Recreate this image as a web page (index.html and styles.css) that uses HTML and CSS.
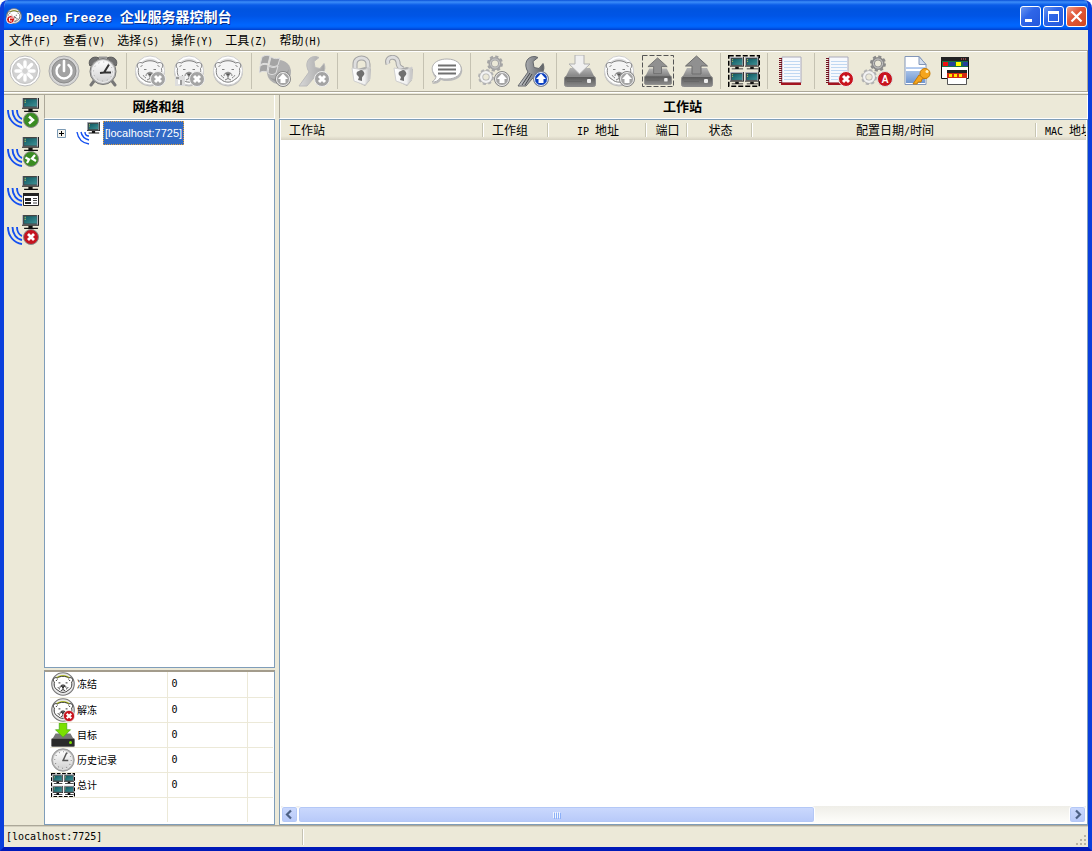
FILE: index.html
```html
<!doctype html>
<html lang="zh-CN">
	<head>
		<meta charset="utf-8">
		<title>Deep Freeze 企业服务器控制台</title>
		<meta name="viewport" content="width=device-width,initial-scale=1" />
		<link rel="stylesheet" href="styles.css">
	</head>
	<body>
		<!-- 图标库 -->
		<svg class="defs" width="0" height="0" aria-hidden="true">
			<defs>
				<linearGradient id="gDisc" x1="0" y1="0" x2="0" y2="1"><stop offset="0" stop-color="#fff"/><stop offset="1" stop-color="#d0d0d0"/></linearGradient>
				<linearGradient id="gMetal" x1="0" y1="0" x2="1" y2="0"><stop offset="0" stop-color="#d8d8d8"/><stop offset="1" stop-color="#a4a4a4"/></linearGradient>
				<linearGradient id="gSteel" x1="0" y1="0" x2="1" y2="0"><stop offset="0" stop-color="#c8cacd"/><stop offset="1" stop-color="#5f6266"/></linearGradient>
				<linearGradient id="gDrive" x1="0" y1="0" x2="0" y2="1"><stop offset="0" stop-color="#b4b4b4"/><stop offset="1" stop-color="#7c7c7c"/></linearGradient>
				<linearGradient id="gFront" x1="0" y1="0" x2="0" y2="1"><stop offset="0" stop-color="#555"/><stop offset="1" stop-color="#8c8c8c"/></linearGradient>
				<linearGradient id="gLock" x1="0" y1="0" x2="1" y2="0"><stop offset="0" stop-color="#fff"/><stop offset=".7" stop-color="#f0f0f0"/><stop offset="1" stop-color="#bdbdbd"/></linearGradient>
				<linearGradient id="gDoc" x1="0" y1="0" x2="0" y2="1"><stop offset="0" stop-color="#b9cff0"/><stop offset="1" stop-color="#6f96d0"/></linearGradient>
				<linearGradient id="gScreen" x1="0" y1="0" x2="1" y2="1"><stop offset="0" stop-color="#0c5560"/><stop offset="1" stop-color="#3f9295"/></linearGradient>
			</defs>
			<symbol id="snow" viewBox="0 0 32 32">
				<circle cx="16" cy="16" r="15" fill="#fff" stroke="#bdbdbd"/>
				<circle cx="16" cy="16" r="12.500" fill="#d2d2d2" stroke="#c4c4c4"/>
				<g stroke="#fff" stroke-width="3.400" stroke-linecap="round"><path d="M16 7v4M16 21v4M7 16h4M21 16h4M9.500 9.500l3 3M19.500 19.500l3 3M22.500 9.500l-3 3M12.500 19.500l-3 3"/></g>
				<circle cx="16" cy="16" r="3.500" fill="#d2d2d2" stroke="#fff"/>
			</symbol>
			<symbol id="power" viewBox="0 0 32 32">
				<circle cx="16" cy="16" r="15" fill="#d6d6d6" stroke="#aaa"/>
				<circle cx="16" cy="16" r="12" fill="#a2a2a2" stroke="#8c8c8c"/>
				<path d="M11.500 10a7.500 7.500 0 1 0 9 0" fill="none" stroke="#fff" stroke-width="2.400" stroke-linecap="round"/>
				<path d="M16 6v10" stroke="#fff" stroke-width="2.600" stroke-linecap="round"/>
			</symbol>
			<symbol id="alarm" viewBox="0 0 32 32">
				<path d="M7 26l-3 4M25 26l3 4" stroke="#777" stroke-width="3" stroke-linecap="round"/>
				<path d="M3 11C0 5 6 0 12 3zM29 11c3-6-3-11-9-8z" fill="#707070" stroke="#5c5c5c"/>
				<path d="M12 2.500h8" stroke="#999" stroke-width="2"/>
				<circle cx="16" cy="16.500" r="13" fill="#b8b8b8" stroke="#777"/>
				<circle cx="16" cy="16.500" r="11" fill="url(#gDisc)" stroke="#eee"/>
				<path d="M22 9.500l-5 8-4 .5M17 17.500h7" fill="none" stroke="#333" stroke-width="2"/>
				<circle cx="16" cy="16.500" r="9.500" fill="none" stroke="#aaa" stroke-dasharray="1 3.970"/>
			</symbol>
			<symbol id="bearFace" viewBox="0 0 32 32">
				<path d="M4.500 13.500c-3-3-.5-7.500 4-5.500 4-3 11-3 15 0 4.500-2 7 2.500 4 5.500 1 6-1 9-5 11-3 3.500-10 3.500-13 0-4-2-6-5-5-11z"/>
				<path d="M6.500 12l2-2M25.500 12l-2-2M10 14.500h2.500M19.500 14.500H22M9 20c1 1 1 2 3 3M23 20c-1 1-1 2-3 3M12 21c0-5 8-5 8 0M16 21v2.500l-3 1.500M16 23.500l3 1.500" fill="none"/>
				<path d="M13.500 18.500h5L16 21.500z" fill="#555"/>
			</symbol>
			<symbol id="bear" viewBox="0 0 32 32">
				<circle cx="16" cy="16.500" r="15" fill="#bcbcbc"/>
				<circle cx="16" cy="15.500" r="14.500" fill="#fff" stroke="#d0d0d0"/>
				<circle cx="16" cy="15.500" r="12" fill="#dcdcdc"/>
				<use href="#bearFace" fill="#f4f4f4" stroke="#808080"/>
			</symbol>
			<symbol id="bearOn" viewBox="0 0 32 32">
				<circle cx="16" cy="16" r="15" fill="#e8e8e8" stroke="#777" stroke-width="1.500"/>
				<path d="M4 11c4-9 20-9 24 0v3H4z" fill="#b4c400"/>
				<use href="#bearFace" fill="#fff" stroke="#333" stroke-width="1.300"/>
			</symbol>
			<symbol id="badgeX" viewBox="0 0 32 32">
				<circle cx="24" cy="24" r="7.500" fill="currentColor" stroke="#eee"/>
				<path d="M21 21l6 6M27 21l-6 6" stroke="#fff" stroke-width="3"/>
			</symbol>
			<symbol id="badgeUp" viewBox="0 0 32 32">
				<circle cx="24" cy="24" r="7.500" fill="currentColor" stroke="#888"/>
				<circle cx="24" cy="24" r="6.500" fill="none" stroke="#eee"/>
				<path d="M24 18.500l5 5.500h-2.500v4h-5v-4H19z" fill="#fff"/>
			</symbol>
			<symbol id="winGlobe" viewBox="0 0 32 32">
				<circle cx="20" cy="17" r="12" fill="#b0b0b0"/>
				<path d="M10 22c6 4 14 2 20-8-2 12-10 18-20 8z" fill="#999"/>
				<path d="M3 2c3-2 5-2 8-1l-2 8c-3-1-5-1-8 1zM12 2c3 2 6 2 9 1l-2 7c-3 2-5 2-9 0zM1 11c3-2 5-2 8-1l-1 7c-3-1-5-1-8 1zM10 11c3 2 5 2 9 0l-2 7c-3 2-5 2-8 0z" fill="#a4a4a4" stroke="#dedede"/>
			</symbol>
			<symbol id="wrench" viewBox="0 0 32 32">
				<path d="M1 31l10-14C6 9 10 1 18 1.500l3 1-5 4 1 6 5 1 4-5c3 7-2 13-8 12L9 31z" fill="url(#gMetal)" stroke="#bbb"/>
			</symbol>
			<symbol id="wrenchOn" viewBox="0 0 32 32">
				<path d="M1 31l10-14C6 9 10 1 18 1.500l3 1-5 4 1 6 5 1 4-5c3 7-2 13-8 12L9 31z" fill="url(#gSteel)" stroke="#66696d"/>
				<path d="M5 30l8-12M8 30l7-11" stroke="#44474b" fill="none"/>
			</symbol>
			<symbol id="lockBody" viewBox="0 0 32 32">
				<path d="M8 15l12-3 6 2-1 11-5 6-10-5z" fill="#aaa"/>
				<path d="M7 13l12 2 6-3v12l-5 6-11-4z" fill="url(#gLock)" stroke="#d0d0d0"/>
				<path d="M14 16a2.500 2.500 0 0 0-1.500 4.500L14 22l-1 3 4 1v-3.500l1-1.500a2.500 2.500 0 0 0-4-5z" fill="#707070"/>
			</symbol>
			<symbol id="lock" viewBox="0 0 32 32">
				<path d="M10 14V9c0-8 13-8 13 0v5" fill="none" stroke="#a4a4a4" stroke-width="5"/>
				<path d="M10 14V9c0-8 13-8 13 0v5" fill="none" stroke="#dedede" stroke-width="3"/>
				<use href="#lockBody"/>
			</symbol>
			<symbol id="unlock" viewBox="0 0 32 32">
				<path d="M4 9c-3-8 9-9 10-2 0 4 1 5 5 7" fill="none" stroke="#a4a4a4" stroke-width="5"/>
				<path d="M4 9c-3-8 9-9 10-2 0 4 1 5 5 7" fill="none" stroke="#dedede" stroke-width="3"/>
				<use href="#lockBody" x="3"/>
			</symbol>
			<symbol id="speech" viewBox="0 0 32 32">
				<path d="M17 5c19 0 19 21 0 21-3 0-5 0-7-1-2 3-5 4-9 4 3-2 4-4 4-6C-3 16 3 5 17 5z" fill="#bbb"/>
				<path d="M16 4c19 0 19 20 0 20-3 0-5 0-7-1-2 3-4 4-8 4 3-2 4-4 4-6C-3 14 2 4 16 4z" fill="#fff" stroke="#b0b0b0"/>
				<path d="M7 10.500h18M7 14.500h18M7 18.500h18" stroke="#707070" stroke-width="1.800"/>
			</symbol>
			<symbol id="gears" viewBox="0 0 32 32">
				<circle cx="17" cy="8.500" r="7" fill="none" stroke="currentColor" stroke-width="2" stroke-dasharray="3.200 2.300"/>
				<circle cx="17" cy="8.500" r="4.800" fill="none" stroke="currentColor" stroke-width="3.600"/>
				<circle cx="17" cy="8.500" r="4.500" fill="none" stroke="#ccc"/>
				<circle cx="8" cy="22" r="7" fill="none" stroke="#b4b4b4" stroke-width="2" stroke-dasharray="3.200 2.300"/>
				<circle cx="8" cy="22" r="4.800" fill="none" stroke="#b0b0b0" stroke-width="4"/>
				<circle cx="8" cy="22" r="4.800" fill="none" stroke="#f2f2f2" stroke-width="2.400"/>
			</symbol>
			<symbol id="drive" viewBox="0 0 32 32">
				<path d="M6 13h20l5 10H1z" fill="url(#gDrive)"/>
				<rect x=".5" y="21.500" width="31" height="10" rx="2" fill="url(#gFront)" stroke="#8a8a8a"/>
				<path d="M3 26.500h15" stroke="#666"/>
				<rect x="23" y="24" width="4" height="4" rx="1" fill="#eee"/>
			</symbol>
			<symbol id="driveOn" viewBox="0 0 32 32">
				<path d="M6 14h20l5 9H1z" fill="#777"/>
				<rect x=".5" y="20.500" width="31" height="11" rx="2" fill="#2a2a2a" stroke="#777"/>
				<circle cx="26" cy="26" r="2" fill="#7de000"/>
				<path d="M11 0h10v9h5L16 19 6 9h5z" fill="#7be000" stroke="#4aa818"/>
			</symbol>
			<symbol id="arrowDown" viewBox="0 0 32 32"><path d="M11 0h9v9h6L15.500 19 5 9h6z" fill="#f0f0f0" stroke="#b0b0b0"/></symbol>
			<symbol id="arrowUp" viewBox="0 0 32 32"><path d="M15.500 1l11 10H20v8h-9v-8H4.500z" fill="#909090" stroke="#6c6c6c"/></symbol>
			<symbol id="dashes" viewBox="0 0 32 32"><rect x=".5" y=".5" width="31" height="31" fill="none" stroke="currentColor" stroke-dasharray="5 2"/></symbol>
			<symbol id="monitor" viewBox="0 0 16 16">
				<path d="M0 0h16v11H0z" fill="#222"/>
				<path d="M0 0h15v10H0z" fill="#b8bcc6"/>
				<path d="M1 1h13v9H1z" fill="#444"/>
				<path d="M2 2h12v7H2z" fill="url(#gScreen)"/>
				<path d="M2.500 3h1M2.500 5h1" stroke="#e8e060"/>
				<path d="M6 11h4v2H6zM2 13h13v1H2z" fill="#111"/>
			</symbol>
			<symbol id="four" viewBox="0 0 32 32">
				<rect x=".75" y=".75" width="30.500" height="30.500" fill="none" stroke="#000" stroke-width="1.500" stroke-dasharray="5 2"/>
				<use href="#monitor" x="2" y="2" width="14" height="14"/>
				<use href="#monitor" x="17" y="2" width="14" height="14"/>
				<use href="#monitor" x="2" y="17" width="14" height="14"/>
				<use href="#monitor" x="17" y="17" width="14" height="14"/>
			</symbol>
			<symbol id="notebook" viewBox="0 0 32 32">
				<path d="M6 4h20v26H6z" fill="#a31420"/>
				<path d="M7 2h19v26H7z" fill="#f7f9fd" stroke="#aab"/>
				<path d="M9 6.500h16M9 9.500h16M9 12.500h16M9 15.500h16M9 18.500h16M9 21.500h16M9 24.500h16" stroke="#c0d8f2"/>
				<path d="M5.500 3v26" stroke="#701020" stroke-width="3" stroke-dasharray="1 1"/>
				<path d="M6 28.500h20" stroke="#a31420" stroke-width="2"/>
			</symbol>
			<symbol id="docKey" viewBox="0 0 32 32">
				<path d="M5 1.500h14l7 8v20H5z" fill="#fff" stroke="#8296b8"/>
				<path d="M19 1.500v8h7z" fill="#d3deee" stroke="#8296b8"/>
				<path d="M6 12h19v2H6zM6 16h19v12H6z" fill="url(#gDoc)"/>
				<path d="M19 20L13 29h4l1-2h3l1-3 5-1z" fill="#f6a51c" stroke="#c47a08"/>
				<circle cx="25" cy="18.500" r="5" fill="#f6a51c" stroke="#c47a08"/>
				<circle cx="27" cy="16.500" r="1.500" fill="#fff0c0"/>
			</symbol>
			<symbol id="report" viewBox="0 0 32 32">
				<path d="M2.500 2.500h27v21h-27z" fill="#fff" stroke="#111"/>
				<path d="M2 2h28v4H2z" fill="#222"/><path d="M22 4h6" stroke="#e66" stroke-dasharray="1 1"/>
				<path d="M3 6h26v6H3z" fill="#187048"/>
				<path d="M4 7h5v4H4z" fill="#e11"/><path d="M10 7h6v4h-6zM24 7h5v4h-5z" fill="#24419c"/><path d="M17 7h5v4h-5z" fill="#ff0"/>
				<path d="M8.500 15.500h19v14h-19z" fill="#fff" stroke="#555"/>
				<path d="M8 15h20v3H8z" fill="#222"/><path d="M8 18h20v5H8z" fill="#d42a10"/>
				<path d="M10 20.500h13" stroke="#ffe600" stroke-width="3" stroke-dasharray="3 2"/>
			</symbol>
			<symbol id="waves" viewBox="0 0 32 32">
				<g fill="none" stroke="#1450f0" stroke-width="1.900"><path d="M1 12c0 9 6 16 14 17M5.500 12c0 7 4 12 9.500 13M10 12c0 4 2 8 5 9"/></g>
			</symbol>
			<symbol id="station" viewBox="0 0 32 32">
				<use href="#waves"/><use href="#monitor" x="15" y="-1" width="17" height="17"/>
			</symbol>
			<symbol id="badgeGreen" viewBox="0 0 32 32"><circle cx="24" cy="22" r="7.500" fill="#3a8c22" stroke="#8a8a8a"/></symbol>
			<symbol id="clock" viewBox="0 0 32 32">
				<circle cx="16" cy="16" r="15" fill="#b8b8b8" stroke="#888"/>
				<circle cx="16" cy="16" r="12.500" fill="url(#gDisc)" stroke="#eee"/>
				<circle cx="16" cy="16" r="11" fill="none" stroke="#777" stroke-width="1.500" stroke-dasharray="1 4.760"/>
				<path d="M21 6l-5 11M15 16.500h8" stroke="#555" stroke-width="2"/>
			</symbol>
		</svg>

		<div class="window">
			<header class="titlebar">
				<svg class="app-icon"><use href="#bearOn"/><circle cx="4.500" cy="11.500" r="4" fill="#d01818" stroke="#fff"/><path d="M7 10H3.500v3H6" fill="none" stroke="#fff"/></svg>
				<h1><span class="latin">Deep Freeze </span>企业服务器控制台</h1>
				<div class="win-btns">
					<button type="button" aria-label="最小化"><svg viewBox="0 0 21 21"><path d="M5 13h7v3H5z" fill="#fff"/></svg></button>
					<button type="button" aria-label="最大化"><svg viewBox="0 0 21 21"><path d="M5 5h11v11H5zM6 8v7h9V8z" fill="#fff" fill-rule="evenodd"/></svg></button>
					<button type="button" class="close" aria-label="关闭"><svg viewBox="0 0 21 21"><path d="M5.500 5.500l10 10M15.500 5.500l-10 10" stroke="#fff" stroke-width="2.200"/></svg></button>
				</div>
			</header>

			<nav class="menu">
				<button type="button">文件<span class="latin">(F)</span></button>
				<button type="button">查看<span class="latin">(V)</span></button>
				<button type="button">选择<span class="latin">(S)</span></button>
				<button type="button">操作<span class="latin">(Y)</span></button>
				<button type="button">工具<span class="latin">(Z)</span></button>
				<button type="button">帮助<span class="latin">(H)</span></button>
			</nav>

			<div class="toolbar">
				<div class="group">
					<button type="button" aria-label="冻结"><svg><use href="#snow"/></svg></button>
					<button type="button" aria-label="关机"><svg><use href="#power"/></svg></button>
					<button type="button" aria-label="计划"><svg><use href="#alarm"/></svg></button>
				</div>
				<div class="group">
					<button type="button" aria-label="解冻"><svg class="off"><use href="#bear"/><use href="#badgeX"/></svg></button>
					<button type="button" aria-label="锁定解冻"><svg class="off"><path d="M3 12h26v17H3z" fill="#ccc"/><use href="#bear"/><path d="M2 21h10v10H2z" fill="#ddd"/><path d="M3 22h3v2H3zM7 25h2v5H7z" fill="#999"/><path d="M5 25h2v4H5z" fill="#fff"/><use href="#badgeX"/></svg></button>
					<button type="button" aria-label="重启冻结"><svg><use href="#bear"/></svg></button>
				</div>
				<div class="group">
					<button type="button" aria-label="系统更新"><svg class="off"><use href="#winGlobe"/><use href="#badgeUp"/></svg></button>
					<button type="button" aria-label="停止维护"><svg class="off"><use href="#wrench"/><use href="#badgeX"/></svg></button>
				</div>
				<div class="group">
					<button type="button" aria-label="锁定"><svg><use href="#lock"/></svg></button>
					<button type="button" aria-label="解锁"><svg><use href="#unlock"/></svg></button>
				</div>
				<div class="group">
					<button type="button" aria-label="发送消息"><svg><use href="#speech"/></svg></button>
				</div>
				<div class="group">
					<button type="button" aria-label="更新配置"><svg class="off"><use href="#gears"/><use href="#badgeUp"/></svg></button>
					<button type="button" aria-label="更新工具"><svg class="blue"><use href="#wrenchOn"/><use href="#badgeUp"/></svg></button>
				</div>
				<div class="group">
					<button type="button" aria-label="安装"><svg><use href="#drive"/><use href="#arrowDown"/></svg></button>
					<button type="button" aria-label="更新"><svg class="off"><use href="#bear"/><use href="#badgeUp"/></svg></button>
					<button type="button" aria-label="卸载所选"><svg class="dark"><use href="#drive" x="2" y="2" width="28" height="28"/><use href="#arrowUp" x="2" y="2" width="28" height="28"/><use href="#dashes"/></svg></button>
					<button type="button" aria-label="卸载"><svg><use href="#drive"/><use href="#arrowUp"/></svg></button>
				</div>
				<div class="group">
					<button type="button" aria-label="全选"><svg><use href="#four"/></svg></button>
				</div>
				<div class="group">
					<button type="button" aria-label="日志"><svg><use href="#notebook"/></svg></button>
				</div>
				<div class="group">
					<button type="button" aria-label="清除日志"><svg class="red"><use href="#notebook"/><use href="#badgeX"/></svg></button>
					<button type="button" aria-label="配置管理"><svg class="grey"><use href="#gears"/><circle cx="24" cy="24" r="7.500" fill="#c8141e" stroke="#ddd"/><text class="badge-text" x="24" y="28">A</text></svg></button>
					<button type="button" aria-label="密码"><svg><use href="#docKey"/></svg></button>
					<button type="button" aria-label="报告"><svg><use href="#report"/></svg></button>
				</div>
			</div>

			<main>
				<aside class="sidebar">
					<button type="button" aria-label="连接"><svg><use href="#station"/><use href="#badgeGreen"/><path d="M22 18.500l4 3.500-4 3.500" fill="none" stroke="#fff" stroke-width="2.500"/></svg></button>
					<button type="button" aria-label="断开"><svg><use href="#station"/><use href="#badgeGreen"/><path d="M18.500 20.500l3.500 2-2 3.500M28 18l-3 3.500 4 2.500" fill="none" stroke="#fff" stroke-width="2.200"/></svg></button>
					<button type="button" aria-label="属性"><svg><use href="#station"/><path d="M16.500 17.500h15v12h-15z" fill="#fff" stroke="#222"/><path d="M16 17h16v3H16zM18 22h6v3h-6zM18 26h6v2h-6z" fill="#222"/><path d="M26 22.500h4M26 24.500h4M26 27h4" stroke="#444"/></svg></button>
					<button type="button" aria-label="移除"><svg><use href="#station"/><circle cx="24" cy="22" r="7.500" fill="#c41420" stroke="#8a8a8a"/><path d="M21 19l6 6M27 19l-6 6" stroke="#fff" stroke-width="2.800"/></svg></button>
				</aside>

				<section class="left">
					<h2>网络和组</h2>
					<ul class="tree">
						<li>
							<button type="button" class="expand" aria-label="展开"><svg viewBox="0 0 9 9"><path d="M.5.5h8v8h-8z" fill="#f4f3ee" stroke="#7b9ab5"/><path d="M2 4.500h5M4.500 2v5" stroke="#000"/></svg></button>
							<svg class="node-icon" viewBox="0 0 24 24"><path d="M1 11c1 6 5 11 12 12M5 11c1 5 4 7 8 8M9 11c0 3 2 4 4 4" fill="none" stroke="#1450f0" stroke-width="1.400"/><use href="#monitor" x="11" y="1" width="13" height="13"/></svg>
							<a href="#" class="node">[localhost:7725]</a>
						</li>
					</ul>
					<div class="stats">
						<table>
							<colgroup><col class="c-name"><col class="c-num"><col></colgroup>
							<tr><th scope="row"><svg viewBox="0 0 32 32"><use href="#bearOn"/></svg>冻结</th><td>0</td><td></td></tr>
							<tr><th scope="row"><svg viewBox="0 0 32 32" class="red"><use href="#bearOn"/><use href="#badgeX"/></svg>解冻</th><td>0</td><td></td></tr>
							<tr><th scope="row"><svg viewBox="0 0 32 32"><use href="#driveOn"/></svg>目标</th><td>0</td><td></td></tr>
							<tr><th scope="row"><svg viewBox="0 0 32 32"><use href="#clock"/></svg>历史记录</th><td>0</td><td></td></tr>
							<tr><th scope="row"><svg viewBox="0 0 32 32"><use href="#four"/></svg>总计</th><td>0</td><td></td></tr>
							<tr class="last"><td></td><td></td><td></td></tr>
						</table>
					</div>
				</section>

				<section class="right">
					<h2>工作站</h2>
					<div class="list">
						<div class="list-view">
							<table>
								<colgroup><col class="w-station"><col class="w-group"><col class="w-ip"><col class="w-port"><col class="w-state"><col class="w-date"><col class="w-mac"></colgroup>
								<tr>
									<th scope="col" class="start">工作站</th>
									<th scope="col" class="start">工作组</th>
									<th scope="col"><span class="latin">IP </span>地址</th>
									<th scope="col">端口</th>
									<th scope="col">状态</th>
									<th scope="col">配置日期<span class="latin">/</span>时间</th>
									<th scope="col" class="start"><span class="latin">MAC </span>地址</th>
								</tr>
							</table>
						</div>
						<div class="scroll">
							<button type="button" aria-label="向左"><svg viewBox="0 0 17 17"><path d="M10 4.500l-4 4 4 4" fill="none" stroke="#4d6185" stroke-width="2.200"/></svg></button>
							<div class="track"><div class="thumb"><i></i><i></i><i></i><i></i></div></div>
							<button type="button" aria-label="向右"><svg viewBox="0 0 17 17"><path d="M7 4.500l4 4-4 4" fill="none" stroke="#4d6185" stroke-width="2.200"/></svg></button>
						</div>
					</div>
				</section>
			</main>

			<footer class="status">
				<span class="host">[localhost:7725]</span>
				<svg class="grip" viewBox="0 0 13 13"><path d="M9 1h2v2H9zM5 5h2v2H5zM9 5h2v2H9zM1 9h2v2H1zM5 9h2v2H5zM9 9h2v2H9z" fill="#b8b4a3"/></svg>
			</footer>
		</div>
	</body>
</html>
```
FILE: styles.css
```css
* {
	margin: 0;
	padding: 0;
	box-sizing: border-box;
}
body{
	background-color: #fff;
	color: #000;
	font: 12px/16px "Noto Sans CJK SC", sans-serif;
}
button{
	border: 0;
	background: none;
	font: inherit;
	color: inherit;
}
svg{
	display: block;
	flex: none;
}
.defs{
	position: absolute;
}
.latin{
	font-family: "DejaVu Sans Mono", monospace;
	font-size: 10px;
	line-height: 12px;
	white-space: pre;
}
.off{color: #a4a4a4;}
.blue{color: #0a3fc0;}
.red{color: #c8141e;}
.grey{color: #8a8a8a;}
.dark{color: #555;}

/* 窗口 */
.window{
	min-height: 100vh;
	display: flex;
	flex-direction: column;
	background-color: #ece9d8;
	border: solid #0a3fdc;
	border-width: 0 4px 4px;
	border-bottom-color: #0019b8;
	border-radius: 8px 8px 0 0;
	overflow: hidden;
}
.titlebar{
	height: 30px;
	margin: 0 -4px;
	padding: 2px 5px 0 6px;
	display: flex;
	align-items: center;
	background: linear-gradient(#0a50d8 0, #3c8df8 2px, #0a5ce8 5px, #0054e0 9px, #0055e6 16px, #0066ff 25px, #0062f8 27px, #003fce 30px);
}
.app-icon{
	width: 16px;
	height: 16px;
	margin-right: 4px;
}
.titlebar h1{
	flex: 1;
	color: #fff;
	font-size: 14px;
	line-height: 20px;
	font-weight: bold;
	text-shadow: 1px 1px #0a2f8c;
}
.titlebar h1 .latin{
	font-family: "Liberation Mono", monospace;
	font-size: 13px;
}
.win-btns{
	display: flex;
	gap: 2px;
}
.win-btns button{
	width: 21px;
	height: 21px;
	border: 1px solid #fff;
	border-radius: 3px;
	background: linear-gradient(135deg, #6b96f0, #2f66e8 40%, #2458dc);
}
.win-btns .close{
	background: linear-gradient(135deg, #f0a08a, #e2583a 40%, #d04820);
}
.win-btns svg{
	width: 21px;
	height: 21px;
	margin: -1px;
}

/* 菜单 */
.menu{
	height: 20px;
	display: flex;
	gap: 12px;
	padding-left: 5px;
	align-items: center;
}

/* 工具栏 */
.toolbar{
	height: 42px;
	display: flex;
	align-items: center;
	border-top: 1px solid #aca899;
	border-bottom: 1px solid #aca899;
	border-right: 1px solid #aca899;
	box-shadow: inset 0 1px #fff, 0 1px #fff;
	padding-left: 1px;
}
.group{
	display: flex;
}
.group + .group{
	margin-left: 4px;
	border-left: 1px solid #c5c2b2;
	padding-left: 3px;
}
.group button{
	width: 39px;
	height: 36px;
	padding-left: 4px;
}
.group svg,.sidebar svg{
	width: 32px;
	height: 32px;
}
.badge-text{
	fill: #fff;
	font: bold 10px "Liberation Sans", sans-serif;
	text-anchor: middle;
}

/* 主体 */
main{
	flex: 1;
	display: flex;
	margin-top: 2px;
	border-top: 1px solid #aca899;
}
.sidebar{
	width: 40px;
	padding: 3px 3px 0;
	display: flex;
	flex-direction: column;
	gap: 7px;
}
.left,.right{
	display: flex;
	flex-direction: column;
}
.left{
	width: 231px;
}
.right{
	flex: 1;
	min-width: 0;
	margin-left: 4px;
}
h2{
	height: 24px;
	padding-right: 2px;
	border-left: 1px solid #aca899;
	border-right: 1px solid #fff;
	border-bottom: 1px solid #fff;
	font-size: 13px;
	line-height: 22px;
	font-weight: bold;
	text-align: center;
}
.tree,.stats,.list{
	background-color: #fff;
	border: 1px solid #7f9db9;
}
.tree{
	flex: 1;
	list-style: none;
	padding: 1px 12px;
}
.tree li{
	display: flex;
	align-items: center;
}
.expand svg{
	width: 9px;
	height: 9px;
}
.node-icon{
	width: 24px;
	height: 24px;
	margin: 0 3px 0 10px;
}
.node{
	height: 24px;
	padding: 0 1px;
	border: 1px dotted #e0a040;
	background-color: #316ac5;
	color: #fff;
	font: 11px/22px "Liberation Sans", sans-serif;
	text-decoration: none;
}

/* 统计 */
.stats{
	margin-top: 2px;
	padding: 0 1px 2px 5px;
	border-top: 2px solid #a39c8c;
}
.stats table,.list table{
	width: 100%;
	table-layout: fixed;
	border-collapse: collapse;
}
.stats tr{
	height: 25px;
	border-bottom: 1px solid #ece9d8;
}
.stats .last{
	border-bottom: 0;
}
.c-name{width: 117px;}
.c-num{width: 80px;}
.stats th{
	display: flex;
	align-items: center;
	gap: 2px;
	height: 24px;
	padding-left: 1px;
	font-size: 10px;
	font-weight: normal;
}
.stats td{
	padding-left: 4px;
	border-left: 1px solid #ece9d8;
	font: 10px/16px "DejaVu Sans Mono", monospace;
}
.stats .last td:first-child{
	border-left: 0;
}
.stats th svg{
	width: 24px;
	height: 24px;
}

/* 工作站列表 */
.list{
	flex: 1;
	display: flex;
	flex-direction: column;
	padding: 0 1px 1px;
}
.list-view{
	flex: 1;
	overflow: hidden;
}
.list table{
	width: 870px;
}
.w-station{width: 203px;}
.w-group{width: 65px;}
.w-ip{width: 98px;}
.w-port{width: 41px;}
.w-state{width: 65px;}
.w-date{width: 284px;}
.list tr{
	height: 20px;
	background: linear-gradient(#ece9d8 16px, #d6d2c2);
}
.list th{
	font-weight: normal;
	background: linear-gradient(#c7c5b2, #c7c5b2) right 1px center/1px 14px no-repeat, linear-gradient(#fff, #fff) right center/1px 14px no-repeat;
}
.list .start{
	padding-left: 8px;
	text-align: left;
}
.scroll{
	display: flex;
	height: 17px;
	background: linear-gradient(#efeee8, #fefefb);
}
.scroll button,.thumb{
	border: 1px solid #fff;
	border-radius: 3px;
	background: linear-gradient(#cbd9fd, #b7c9f9);
	box-shadow: inset 0 0 0 1px #b4c8f6;
}
.scroll button{
	width: 17px;
}
.scroll svg{
	margin: -1px;
	width: 17px;
	height: 17px;
}
.track{
	flex: 1;
}
.thumb{
	width: 67%;
	height: 17px;
	display: flex;
	justify-content: center;
	align-items: center;
	gap: 1px;
}
.thumb i{
	width: 1px;
	height: 6px;
	background-color: #eef4fe;
	box-shadow: 1px 1px #8cb0f8;
}

/* 状态栏 */
.status{
	height: 22px;
	display: flex;
	align-items: center;
	border-top: 1px solid #aca899;
	box-shadow: inset 0 1px #d4d0c0;
}
.host{
	width: 299px;
	padding-left: 2px;
	border-right: 1px solid #c5c2b2;
	box-shadow: 1px 0 #fff;
	font: 10px/16px "DejaVu Sans Mono", monospace;
}
.grip{
	width: 13px;
	height: 13px;
	margin-left: auto;
	align-self: flex-end;
}
```
